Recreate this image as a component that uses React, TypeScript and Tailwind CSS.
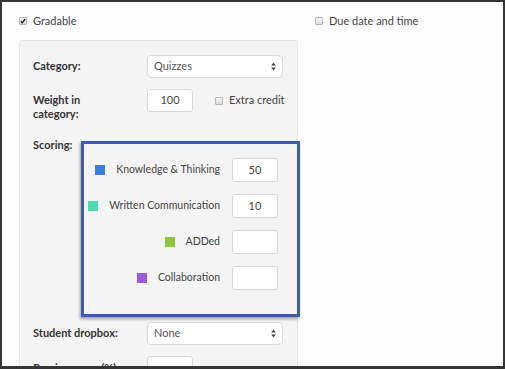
import React from "react";

const font = { fontFamily: "Lato, 'Open Sans', sans-serif" };

function Check({ checked }: { checked?: boolean }) {
  return (
    <span className="flex h-[8px] w-[8px] items-center justify-center rounded-[1px] border border-[#b5b5b5] bg-gradient-to-b from-[#f4f4f4] to-[#dcdcdc]">
      {checked && (
        <svg width="6" height="6" viewBox="0 0 6 6">
          <path d="M0.8 3.2 L2.3 4.7 L5.3 1" stroke="#222" strokeWidth="1.3" fill="none" />
        </svg>
      )}
    </span>
  );
}

function Arrows() {
  return (
    <svg width="5" height="9" viewBox="0 0 5 9">
      <path d="M2.5 0.5 L4.8 3.6 H0.2 Z" fill="#444" />
      <path d="M2.5 8.5 L4.8 5.4 H0.2 Z" fill="#444" />
    </svg>
  );
}

function Select({ value }: { value: string }) {
  return (
    <div className="flex h-[23px] w-[136px] items-center justify-between rounded-[4px] border border-[#d9d9d9] bg-white pl-[6px] pr-[6px] text-[11px] text-[#555]">
      <span>{value}</span>
      <Arrows />
    </div>
  );
}

function ScoreRow({ color, label, value }: { color: string; label: string; value?: string }) {
  return (
    <div className="flex h-[24px] items-center justify-end">
      <span className="h-[10px] w-[10px] shrink-0" style={{ backgroundColor: color }} />
      <span className="ml-[11px] whitespace-nowrap text-[10.5px] text-[#444]">{label}</span>
      <div className="ml-[12px] flex h-[24px] w-[46px] shrink-0 items-center justify-center rounded-[3px] border border-[#d9d9d9] bg-white text-[11px] text-[#444]">
        {value}
      </div>
    </div>
  );
}

export default function App() {
  return (
    <div className="h-[369px] w-[505px] bg-[#353535] pb-[3px] pl-[2px] pr-[2px] pt-[2px]" style={font}>
      <div className="h-full w-full overflow-hidden bg-[#fdfdfd] pl-[17px] pt-[12px]">
        <div className="flex">
          <div className="w-[279px] shrink-0">
            <div className="flex h-[14px] items-center">
              <Check checked />
              <span className="ml-[6px] text-[11px] leading-[14px] text-[#444]">Gradable</span>
            </div>
            <div className="mt-[12px] rounded-[3px] border border-[#e6e6e6] bg-[#f4f4f4] pl-[13px] pt-[13px] pb-[20px]">
              <div className="flex h-[24px] items-center">
                <span className="w-[114px] shrink-0 text-[11px] font-bold text-[#333]">Category:</span>
                <Select value="Quizzes" />
              </div>
              <div className="mt-[11px] flex items-start">
                <span className="w-[114px] shrink-0 pt-[4px] text-[11px] font-bold leading-[14px] text-[#333]">
                  Weight in
                  <br />
                  category:
                </span>
                <div className="flex h-[23px] w-[46px] items-center justify-center rounded-[3px] border border-[#d9d9d9] bg-white text-[11px] text-[#444]">
                  100
                </div>
                <div className="ml-[22px] flex h-[23px] items-center">
                  <Check />
                  <span className="ml-[6px] text-[11px] text-[#444]">Extra credit</span>
                </div>
              </div>
              <div className="mt-[17px] flex items-start">
                <span className="w-[48px] shrink-0 text-[11px] font-bold leading-[14px] text-[#333]">Scoring:</span>
                <div className="mt-[3px] w-[219px] shrink-0 border-[3px] border-[#3d5ea7] bg-[#f4f4f4] pb-[24px] pr-[19px] pt-[14px] shadow-[-1px_2px_3px_rgba(0,0,0,0.35)]">
                  <div className="flex flex-col gap-[12px]">
                    <ScoreRow color="#3a7ee0" label="Knowledge & Thinking" value="50" />
                    <ScoreRow color="#48dcae" label="Written Communication" value="10" />
                    <ScoreRow color="#8dc63f" label="ADDed" />
                    <ScoreRow color="#9b5bdb" label="Collaboration" />
                  </div>
                </div>
              </div>
              <div className="mt-[5px] flex h-[23px] items-center">
                <span className="w-[114px] shrink-0 text-[11px] font-bold text-[#333]">Student dropbox:</span>
                <Select value="None" />
              </div>
              <div className="mt-[11px] flex items-start">
                <span className="w-[114px] shrink-0 pt-[5px] text-[11px] font-bold leading-[14px] text-[#333]">Passing score (%):</span>
                <div className="h-[23px] w-[46px] rounded-[3px] border border-[#d9d9d9] bg-white" />
              </div>
            </div>
          </div>
          <div className="ml-[17px]">
            <div className="flex h-[14px] items-center">
              <Check />
              <span className="ml-[6px] text-[11px] leading-[14px] text-[#444]">Due date and time</span>
            </div>
          </div>
        </div>
      </div>
    </div>
  );
}
